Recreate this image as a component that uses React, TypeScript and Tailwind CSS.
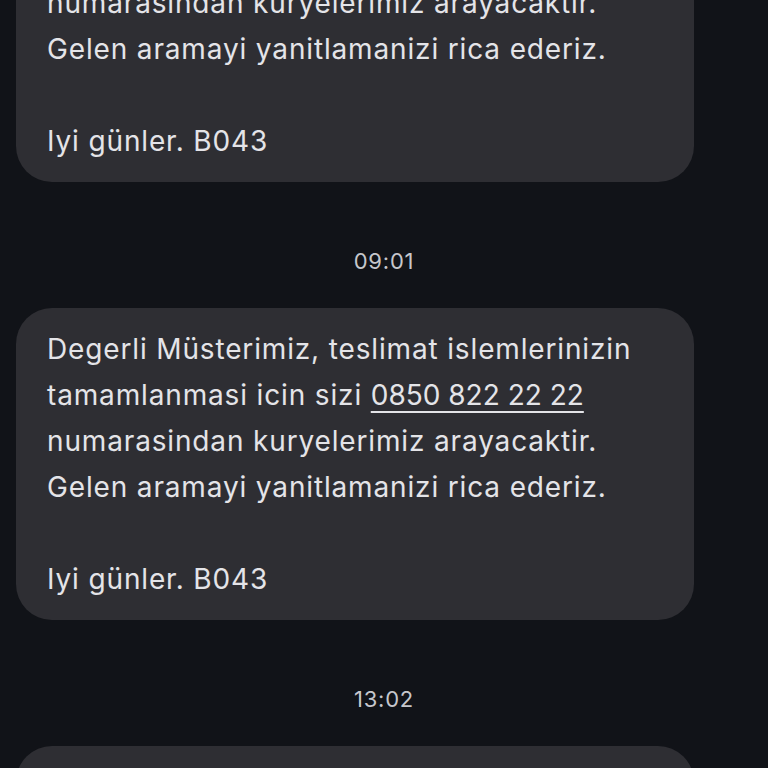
import React from 'react'

const lines = [
  'Degerli Müsterimiz, teslimat islemlerinizin',
  'PHONE',
  'numarasindan kuryelerimiz arayacaktir.',
  'Gelen aramayi yanitlamanizi rica ederiz.',
  '',
  'Iyi günler. B043',
]

function Bubble() {
  return (
    <div className="mx-4 w-[678px] rounded-[36px] bg-[#2e2e33] px-[31px] py-[18px] text-[28px] leading-[46px] tracking-[0.85px] text-[#e4e4e8]">
      {lines.map((line, i) =>
        line === 'PHONE' ? (
          <div key={i}>
            tamamlanmasi icin sizi{' '}
            <span className="tracking-normal underline decoration-[2px] underline-offset-[6px]">0850 822 22 22</span>
          </div>
        ) : (
          <div key={i} className="whitespace-pre">{line || ' '}</div>
        )
      )}
    </div>
  )
}

function Stamp({ time }: { time: string }) {
  return (
    <div className="flex h-[126px] items-start justify-center pt-[65px] text-[22px] leading-[28px] tracking-[0.8px] text-[#c6c7cc]">
      {time}
    </div>
  )
}

export default function App() {
  return (
    <div className="h-[768px] overflow-hidden bg-[#111318]" style={{ fontFamily: 'Inter, Roboto, sans-serif' }}>
      <div className="-mt-[130px]">
        <Bubble />
        <Stamp time="09:01" />
        <Bubble />
        <Stamp time="13:02" />
        <Bubble />
      </div>
    </div>
  )
}
